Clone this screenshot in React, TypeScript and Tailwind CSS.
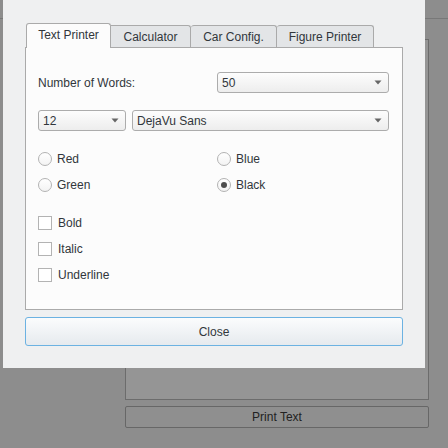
import React from "react";

const font = { fontFamily: '"Liberation Sans", Arial, sans-serif' };

function Combo({ value, className }: { value: string; className?: string }) {
  return (
    <div
      className={`h-[21px] flex items-center justify-between rounded-[3px] border border-[#acacac] bg-gradient-to-b from-[#fdfdfd] to-[#ededed] pl-[4px] pr-[6px] text-[12px] text-[#31363b] ${className ?? ""}`}
    >
      <span>{value}</span>
      <svg width="8" height="5" viewBox="0 0 8 5">
        <polygon points="0.5,0.5 7.5,0.5 4,4.5" fill="#666" />
      </svg>
    </div>
  );
}

function Radio({ label, checked }: { label: string; checked?: boolean }) {
  return (
    <div className="flex items-center h-[14px] gap-[5px]">
      <div className="w-[14px] h-[14px] rounded-full border border-[#b3b3b3] bg-gradient-to-b from-white to-[#f3f3f3] flex items-center justify-center">
        {checked && <div className="w-[6px] h-[6px] rounded-full bg-[#4d4d4d]" />}
      </div>
      <span className="text-[12px] text-[#31363b] leading-none">{label}</span>
    </div>
  );
}

function Check({ label }: { label: string }) {
  return (
    <div className="flex items-center h-[14px] gap-[6px]">
      <div className="w-[14px] h-[14px] border border-[#b3b3b3] bg-white" />
      <span className="text-[12px] text-[#31363b] leading-none">{label}</span>
    </div>
  );
}

export default function App() {
  return (
    <div className="relative w-[448px] h-[448px] overflow-hidden bg-[#8d8d8d]" style={font}>
      {/* underlying window */}
      <div className="h-[19px] border-b border-[#787878]" />
      <div className="ml-[125px] mt-[20px] w-[304px] h-[361px] border border-[#6c6c6c] bg-[#959595]" />
      <div className="ml-[125px] mt-[6px] w-[304px] h-[22px] rounded-[2px] border border-[#676767] bg-[#8f8f8f] flex items-center justify-center text-[12px] text-[#222]">
        Print Text
      </div>

      {/* dialog */}
      <div className="absolute left-[3px] top-0 w-[422px] h-[368px] bg-[#eff0f1] pt-[23px] px-[22px]">
        <div className="flex items-end h-[24px] pl-[1px] text-[12px] text-[#31363b]">
          <div className="relative z-10 mb-[-1px] h-[25px] w-[85px] rounded-t-[3px] border border-b-0 border-[#aaaaaa] bg-[#fcfcfc] flex items-center justify-center pb-[2px]">
            Text Printer
          </div>
          <div className="h-[22px] w-[80px] rounded-tr-[3px] border-t border-r border-[#aaaaaa] bg-[#e3e5e7] flex items-center justify-center">
            Calculator
          </div>
          <div className="h-[22px] w-[86px] rounded-t-[3px] border-t border-r border-[#aaaaaa] bg-[#e3e5e7] flex items-center justify-center">
            Car Config.
          </div>
          <div className="h-[22px] w-[97px] rounded-t-[3px] border-t border-r border-[#aaaaaa] bg-[#e3e5e7] flex items-center justify-center">
            Figure Printer
          </div>
        </div>
        <div className="h-[263px] border border-[#aaaaaa] bg-[#fcfcfc] pl-[12px] pr-[13px] pt-[24px]">
          <div className="flex items-center">
            <div className="w-[179px] text-[12px] text-[#31363b]">Number of Words:</div>
            <Combo value="50" className="flex-1" />
          </div>
          <div className="flex mt-[17px] gap-[6px]">
            <Combo value="12" className="w-[88px]" />
            <Combo value="DejaVu Sans" className="flex-1" />
          </div>
          <div className="grid grid-cols-[179px_1fr] mt-[21px] gap-y-[12px]">
            <Radio label="Red" />
            <Radio label="Blue" />
            <Radio label="Green" />
            <Radio label="Black" checked />
          </div>
          <div className="flex flex-col mt-[24px] gap-[12px]">
            <Check label="Bold" />
            <Check label="Italic" />
            <Check label="Underline" />
          </div>
        </div>
        <div className="mt-[7px] h-[29px] rounded-[3px] border border-[#6cb2e2] bg-gradient-to-b from-[#fbfcfd] to-[#e6eaee] flex items-center justify-center text-[12px] text-[#31363b]">
          Close
        </div>
      </div>
    </div>
  );
}
